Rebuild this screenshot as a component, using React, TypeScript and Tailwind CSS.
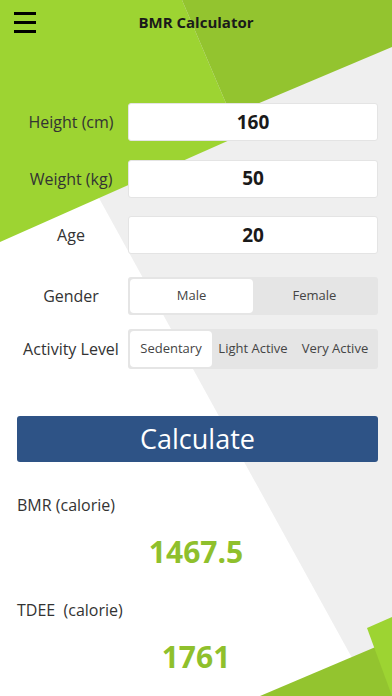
import { useState } from "react"

const font = { fontFamily: '"Open Sans", "Liberation Sans", sans-serif' }

function Backdrop() {
  return (
    <svg
      className="absolute inset-0 h-full w-full"
      viewBox="0 0 392 696"
      preserveAspectRatio="none"
      aria-hidden
    >
      <polygon points="-10,0 392,0 392,696 373,696" fill="#efefef" />
      <polygon points="0,0 182,0 231,115 232,139 0,242" fill="#9dd432" />
      <polygon points="182,0 392,0 392,47 231,115" fill="#93c42f" />
      <polygon points="260,696 392,640 392,696" fill="#93c42f" />
      <polygon points="367,628 392,617 392,696" fill="#9dd432" />
    </svg>
  )
}

function InputRow({ label, value }: { label: string; value: string }) {
  return (
    <div className="flex h-[38px] items-center">
      <div className="w-[114px] text-center text-[16px] text-[#333]">{label}</div>
      <div className="flex h-full flex-1 items-center justify-center rounded-[3px] border border-[#e4e4e4] bg-white text-[19px] font-bold text-[#1a1a1a]">
        {value}
      </div>
    </div>
  )
}

function Segmented({
  label,
  options,
  selected,
  onSelect,
  height,
}: {
  label: string
  options: string[]
  selected: number
  onSelect: (i: number) => void
  height: string
}) {
  return (
    <div className={`flex items-center ${height}`}>
      <div className="w-[114px] text-center text-[16px] text-[#333]">{label}</div>
      <div className="flex h-full flex-1 rounded-[3px] bg-[#e5e5e5] p-[2px]">
        {options.map((option, i) => (
          <button
            key={option}
            type="button"
            onClick={() => onSelect(i)}
            className={`flex flex-1 items-center justify-center rounded-[4px] text-[13px] text-[#444] ${
              i === selected ? "bg-white" : ""
            }`}
          >
            {option}
          </button>
        ))}
      </div>
    </div>
  )
}

export default function App() {
  const [gender, setGender] = useState(0)
  const [activity, setActivity] = useState(0)

  return (
    <div className="relative h-[696px] w-[392px] overflow-hidden bg-white" style={font}>
      <Backdrop />
      <div className="relative flex flex-col">
        <header className="flex h-[45px] items-center px-[14px]">
          <div className="flex w-[22px] flex-col gap-[6px]">
            <span className="block h-[3px] bg-black" />
            <span className="block h-[3px] bg-black" />
            <span className="block h-[3px] bg-black" />
          </div>
          <h1 className="flex-1 text-center text-[15px] font-bold text-[#1a1a1a]">BMR Calculator</h1>
          <div className="w-[22px]" />
        </header>

        <div className="mt-[58px] flex flex-col gap-[18.5px] pr-[14px] pl-[14px]">
          <InputRow label="Height (cm)" value="160" />
          <InputRow label="Weight (kg)" value="50" />
          <InputRow label="Age" value="20" />
        </div>

        <div className="mt-[23px] flex flex-col gap-[14px] pr-[14px] pl-[14px]">
          <Segmented
            label="Gender"
            options={["Male", "Female"]}
            selected={gender}
            onSelect={setGender}
            height="h-[38px]"
          />
          <Segmented
            label="Activity Level"
            options={["Sedentary", "Light Active", "Very Active"]}
            selected={activity}
            onSelect={setActivity}
            height="h-[40px]"
          />
        </div>

        <button
          type="button"
          className="mt-[47px] mr-[14px] ml-[17px] h-[46px] rounded-[3px] bg-[#2e5386] text-[27px] text-white"
        >
          Calculate
        </button>

        <div className="mt-[33px] pl-[17px] text-[16px] leading-[20px] text-[#333]">BMR (calorie)</div>
        <div className="mt-[17px] text-center text-[30px] leading-[40px] font-bold text-[#8fc02c]">1467.5</div>
        <div className="mt-[28px] pl-[17px] text-[16px] leading-[20px] whitespace-pre text-[#333]">
          {"TDEE  (calorie)"}
        </div>
        <div className="mt-[17px] text-center text-[30px] leading-[40px] font-bold text-[#8fc02c]">1761</div>
      </div>
    </div>
  )
}
